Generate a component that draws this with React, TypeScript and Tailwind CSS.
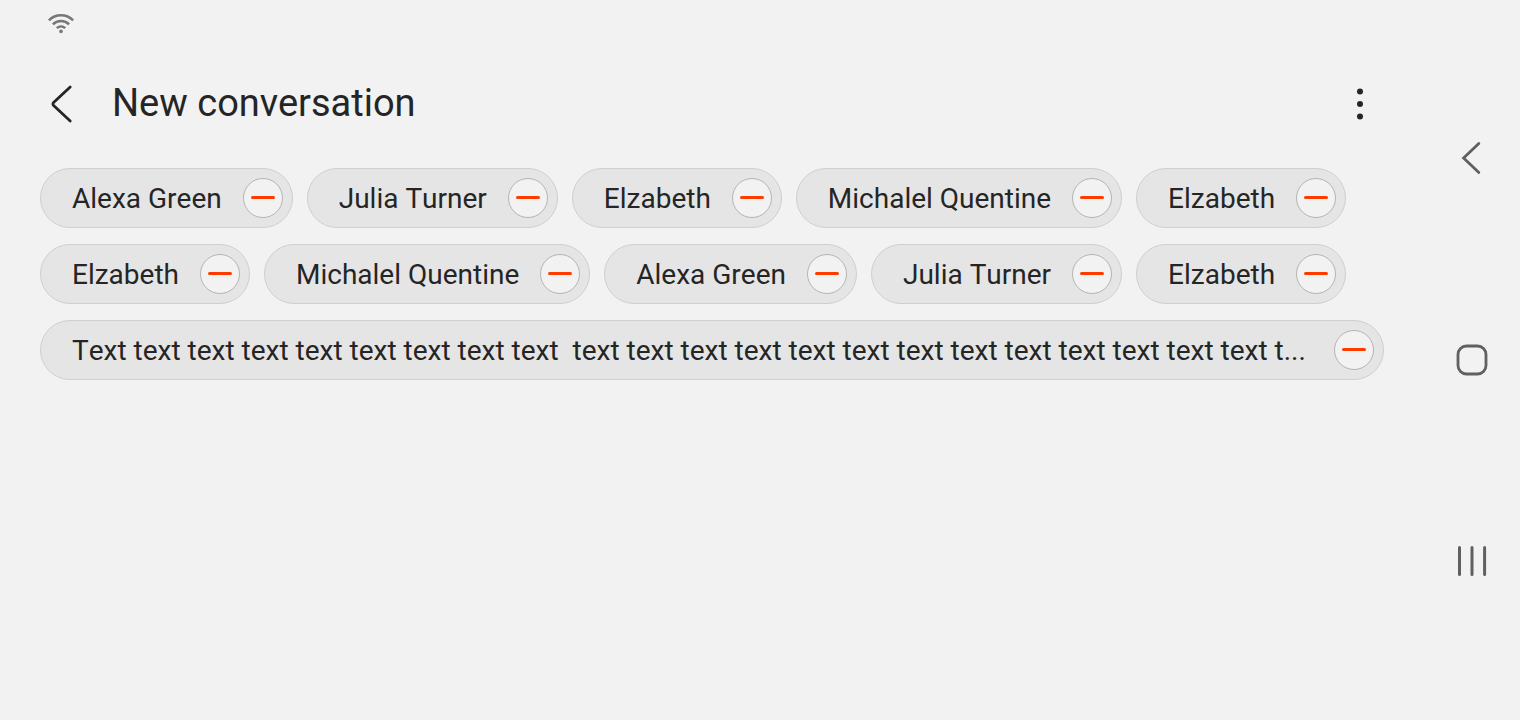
import { useState } from "react";

type Recipient = { id: number; name: string };

const initialRecipients: Recipient[] = [
  "Alexa Green",
  "Julia Turner",
  "Elzabeth",
  "Michalel Quentine",
  "Elzabeth",
  "Elzabeth",
  "Michalel Quentine",
  "Alexa Green",
  "Julia Turner",
  "Elzabeth",
  "Text text text text text text text text text  text text text text text text text text text text text text text t...",
].map((name, id) => ({ id, name }));

const LONG_NAME = 60;

function RecipientChip({ name, onRemove }: { name: string; onRemove: () => void }) {
  const width = name.length > LONG_NAME ? "w-full" : "max-w-full";
  return (
    <li className={`${width} flex h-[60px] items-center gap-[21px] rounded-full border border-[#cfcfcf] bg-[#e5e5e5] pr-[9px] pl-[31px]`}>
      <span className="min-w-0 flex-1 truncate whitespace-pre pt-0.5 text-[28px] leading-10 [font-kerning:none]">{name}</span>
      <button
        type="button"
        aria-label={`Remove ${name}`}
        onClick={onRemove}
        className="flex size-10 shrink-0 items-center justify-center rounded-full border border-[#b4b4b4] bg-[#f2f2f2]"
      >
        <span className="mb-px h-[3px] w-6 rounded-full bg-[#ff3c00]" />
      </button>
    </li>
  );
}

function StatusBar() {
  return (
    <div className="flex h-12 items-center px-2">
      <svg width="26" height="20" viewBox="0 0 26 20" fill="none" stroke="#777777" strokeWidth="2.5" role="img" aria-label="Wi-Fi">
        <path d="M0.9 6.4C7.6 -0.4 18.4 -0.4 25.1 6.4" />
        <path d="M4.9 10.4C9.4 5.9 16.6 5.9 21.1 10.4" />
        <path d="M8.8 14.1C11.2 11.8 14.8 11.8 17.2 14.1" />
        <circle cx="13" cy="17.4" r="1.8" fill="#777777" stroke="none" />
      </svg>
    </div>
  );
}

function SystemNavigation() {
  return (
    <nav aria-label="System" className="flex w-24 shrink-0 flex-col py-[57px] text-[#606060]">
      <button type="button" aria-label="Back" className="flex flex-1 items-center justify-center">
        <svg width="34" height="34" viewBox="0 0 34 34" fill="none" stroke="currentColor" strokeWidth="2.8" strokeLinecap="round">
          <path d="M23.8 2.4 8.6 17l15.2 14.6" />
        </svg>
      </button>
      <button type="button" aria-label="Home" className="flex flex-1 items-center justify-center">
        <svg width="34" height="34" viewBox="0 0 34 34" fill="none" stroke="currentColor" strokeWidth="2.8">
          <rect x="3" y="3" width="28" height="28" rx="8.5" />
        </svg>
      </button>
      <button type="button" aria-label="Recent apps" className="flex flex-1 items-center justify-center">
        <svg width="34" height="34" viewBox="0 0 34 34" fill="none" stroke="currentColor" strokeWidth="3" strokeLinecap="round">
          <path d="M4.5 2.5v27M17 2.5v27M29.6 2.5v27" />
        </svg>
      </button>
    </nav>
  );
}

export default function App() {
  const [recipients, setRecipients] = useState(initialRecipients);

  return (
    <div className="flex min-h-screen bg-[#f2f2f2] font-['Roboto',sans-serif] text-[#252525]">
      <main className="min-w-0 flex-1 px-10">
        <StatusBar />
        <header className="flex h-28 items-center">
          <button type="button" aria-label="Navigate up" className="flex size-11 items-center justify-center">
            <svg width="44" height="44" viewBox="0 0 44 44" fill="none" stroke="currentColor" strokeWidth="2.8" strokeLinecap="round">
              <path d="M30.2 5 13.6 20.6Q12.2 22 13.6 23.4L30.2 39" />
            </svg>
          </button>
          <h1 className="ml-7 flex-1 pb-0.5 text-[38px] leading-12">New conversation</h1>
          <button type="button" aria-label="More options" className="mr-1 flex size-10 items-center justify-center">
            <svg width="8" height="32" viewBox="0 0 8 32" fill="currentColor">
              <circle cx="4" cy="3.5" r="3" />
              <circle cx="4" cy="16" r="3" />
              <circle cx="4" cy="28.5" r="3" />
            </svg>
          </button>
        </header>
        <ul aria-label="Recipients" className="mt-2 flex flex-wrap gap-x-3.5 gap-y-4">
          {recipients.map((recipient) => (
            <RecipientChip
              key={recipient.id}
              name={recipient.name}
              onRemove={() => setRecipients((current) => current.filter((item) => item.id !== recipient.id))}
            />
          ))}
        </ul>
      </main>
      <SystemNavigation />
    </div>
  );
}
